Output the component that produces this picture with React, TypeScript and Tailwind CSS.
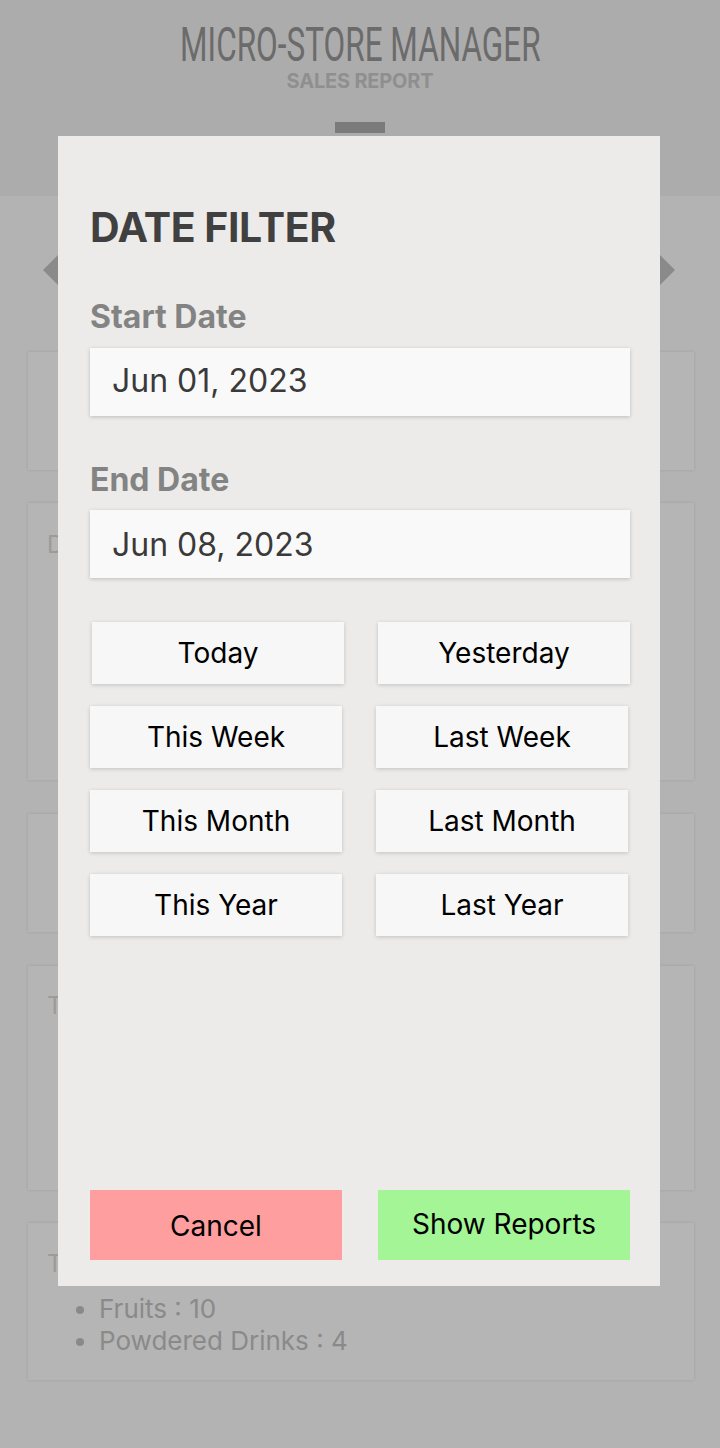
import React from "react";

const inter = { fontFamily: "Inter, 'Noto Sans', sans-serif" };

function Diamond() {
  return (
    <svg width="56" height="56" viewBox="0 0 56 56">
      <polygon points="0,28 28,0 56,28 28,56" fill="#8b8a8a" />
    </svg>
  );
}

function QuickButton({ label, shift }: { label: string; shift?: boolean }) {
  return (
    <button
      className={`h-[62px] w-[252px] bg-[#f7f7f7] shadow-[0_1px_4px_rgba(0,0,0,0.18)] text-[28px] leading-none text-black flex items-center justify-center ${
        shift ? "ml-[2px]" : ""
      }`}
    >
      {label}
    </button>
  );
}

export default function App() {
  return (
    <div
      className="relative w-[720px] h-[1448px] overflow-hidden bg-[#b3b3b3]"
      style={inter}
    >
      {/* Background page (dimmed) */}
      <header className="h-[196px] bg-[#adacac] flex flex-col items-center">
        <div
          className="mt-[25px] h-[40px] text-[49px] leading-[40px] text-[#6b6b6b] scale-x-[0.643] whitespace-nowrap"
          style={{ fontFamily: "Roboto, sans-serif" }}
        >
          MICRO-STORE MANAGER
        </div>
        <div className="mt-[6px] text-[20px] leading-none font-bold text-[#8f8f8f] tracking-[-0.2px]">
          SALES REPORT
        </div>
        <div className="mt-[31px] w-[50px] h-[11px] bg-[#7b7b7b]" />
      </header>

      <div className="flex justify-between h-[56px] mt-[46px] mb-[54px] pl-[43px] pr-[45px]">
        <Diamond />
        <Diamond />
      </div>

      <div className="flex flex-col ml-[28px] w-[666px]">
        <div className="h-[118px] bg-[#b5b5b5] shadow-[0_0_3px_rgba(0,0,0,0.12)]" />
        <div className="mt-[33px] h-[277px] bg-[#b5b5b5] shadow-[0_0_3px_rgba(0,0,0,0.12)] pl-[19px] pt-[30px] text-[24px] leading-none text-[#9b9b9b]">
          Daily
        </div>
        <div className="mt-[34px] h-[118px] bg-[#b5b5b5] shadow-[0_0_3px_rgba(0,0,0,0.12)]" />
        <div className="mt-[34px] h-[224px] bg-[#b5b5b5] shadow-[0_0_3px_rgba(0,0,0,0.12)] pl-[19px] pt-[28px] text-[24px] leading-none text-[#9b9b9b]">
          Top Products
        </div>
        <div className="mt-[33px] h-[157px] bg-[#b5b5b5] shadow-[0_0_3px_rgba(0,0,0,0.12)] pl-[19px] pt-[29px]">
          <div className="text-[24px] leading-none text-[#9b9b9b]">Top Categories</div>
          <ul className="mt-[17px] pl-[52px] list-disc text-[26px] leading-[32px] text-[#8a8a8a] marker:text-[#8a8a8a]">
            <li>Fruits : 10</li>
            <li>Powdered Drinks : 4</li>
          </ul>
        </div>
      </div>

      {/* Modal */}
      <div className="absolute left-[58px] top-[136px] w-[602px] h-[1150px] bg-[#ecebe9] flex flex-col pl-[32px] pr-[30px] pt-[71px] pb-[26px]">
        <div className="text-[41px] leading-none font-bold text-[#404040] tracking-[-0.5px]">
          DATE FILTER
        </div>

        <div className="mt-[53px] text-[32px] leading-none font-bold text-[#838383]">
          Start Date
        </div>
        <div className="mt-[15px] h-[68px] bg-[#faf9f9] shadow-[0_1px_4px_rgba(0,0,0,0.2)] flex items-center pl-[22px] pb-[3px] text-[32px] leading-none text-[#3a3a3a]">
          Jun 01, 2023
        </div>

        <div className="mt-[48px] text-[32px] leading-none font-bold text-[#838383]">
          End Date
        </div>
        <div className="mt-[14px] h-[68px] bg-[#faf9f9] shadow-[0_1px_4px_rgba(0,0,0,0.2)] flex items-center pl-[22px] pt-[2px] text-[32px] leading-none text-[#3a3a3a]">
          Jun 08, 2023
        </div>

        <div className="mt-[44px] grid grid-cols-[252px_252px] gap-x-[34px] gap-y-[22px]">
          <QuickButton label="Today" shift />
          <QuickButton label="Yesterday" shift />
          <QuickButton label="This Week" />
          <QuickButton label="Last Week" />
          <QuickButton label="This Month" />
          <QuickButton label="Last Month" />
          <QuickButton label="This Year" />
          <QuickButton label="Last Year" />
        </div>

        <div className="mt-auto flex justify-between">
          <button className="h-[70px] w-[252px] bg-[#fe9e9e] text-[28px] leading-none text-black flex items-center justify-center pt-[2px]">
            Cancel
          </button>
          <button className="h-[70px] w-[252px] bg-[#a3f596] text-[28px] leading-none text-black flex items-center justify-center pb-[2px]">
            Show Reports
          </button>
        </div>
      </div>
    </div>
  );
}
